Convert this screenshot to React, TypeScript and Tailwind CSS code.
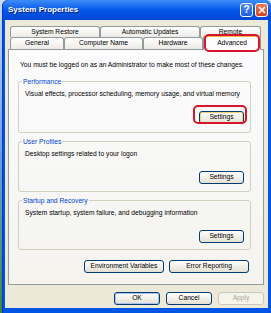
import React from "react";

const Btn = ({
    children,
    className = "",
    disabled = false,
    focus = "",
}: {
    children: React.ReactNode;
    className?: string;
    disabled?: boolean;
    focus?: string;
}) => (
    <div
        className={`h-[13px] flex items-center justify-center rounded-[3px] border leading-none ${
            disabled
                ? "border-[#C9C7BA] bg-[#F5F4EA] text-[#ACA899]"
                : "border-[#003C74] bg-linear-to-b from-white to-[#E3E0D2] text-black"
        } ${focus} ${className}`}
    >
        {children}
    </div>
);

const Tab = ({ label, w, selected = false }: { label: string; w: string; selected?: boolean }) => (
    <div
        className={`${w} flex items-center justify-center rounded-t-[3px] border border-b-0 border-[#919B9C] leading-none ${
            selected
                ? "relative z-10 -mt-[2px] -mb-[1px] bg-[#FCFCFE] border-t-2 border-t-[#F9B64A]"
                : "bg-linear-to-b from-white to-[#ECEBE6]"
        }`}
    >
        {label}
    </div>
);

const Group = ({ title, text, h, hot = false }: { title: string; text: string; h: string; hot?: boolean }) => (
    <fieldset className={`${h} ml-[9px] w-[233px] border border-[#D0D0BF] rounded-[3px] flex flex-col`}>
        <legend className="ml-[3px] px-[1px] text-[#0046D5] leading-[9px]">{title}</legend>
        <div className="pl-[6px] mt-[3px] leading-[9px]">{text}</div>
        <div className="flex justify-end pr-[6px] mt-[13px]">
            <Btn className="w-[45px]" focus={hot ? "shadow-[inset_0_0_0_1px_#F6CF7A]" : ""}>
                Settings
            </Btn>
        </div>
    </fieldset>
);

export default function App() {
    return (
        <div
            className="relative w-[271px] h-[313px] flex bg-linear-to-b from-[#C9DDF4] via-[#6C9ED8] to-[#3F8A2C] text-[6.7px] text-black overflow-hidden"
            style={{ fontFamily: '"Liberation Sans", Arial, sans-serif' }}
        >
            <div className="ml-[2px] flex-1 flex flex-col rounded-t-[6px] bg-[#0055E5] border-l border-[#0831D9]">
                {/* title bar */}
                <div className="h-[20px] flex items-center rounded-t-[6px] bg-linear-to-b from-[#3D8DF7] via-[#0458E9] to-[#0046D6]">
                    <span className="ml-[5px] text-[8px] font-bold text-white [text-shadow:1px_1px_0_#0A1E7A]">
                        System Properties
                    </span>
                    <div className="ml-auto flex gap-[2px] mr-[3px]">
                        <div className="w-[13px] h-[14px] rounded-[3px] border border-white bg-linear-to-b from-[#4A8CF8] to-[#1E5CE0] flex items-center justify-center text-white font-bold text-[10px] leading-none">
                            ?
                        </div>
                        <div className="w-[13px] h-[14px] rounded-[3px] border border-white bg-linear-to-b from-[#EE7A55] to-[#D3401D] flex items-center justify-center">
                            <svg width="8" height="8" viewBox="0 0 8 8">
                                <path d="M1 1L7 7M7 1L1 7" stroke="white" strokeWidth="1.6" />
                            </svg>
                        </div>
                    </div>
                </div>

                {/* body */}
                <div className="flex-1 mr-[3px] ml-[2px] mb-[5px] bg-[#ECE9D8] flex flex-col pl-[3px] pr-[4px] pt-[6px]">
                    <div className="ml-[2px] flex h-[11px]">
                        <Tab label="System Restore" w="w-[90px]" />
                        <Tab label="Automatic Updates" w="w-[100px]" />
                        <Tab label="Remote" w="w-[61px]" />
                    </div>
                    <div className="ml-[2px] flex h-[12px]">
                        <Tab label="General" w="w-[54px]" />
                        <Tab label="Computer Name" w="w-[79px]" />
                        <Tab label="Hardware" w="w-[60px]" />
                        <Tab label="Advanced" w="w-[58px]" selected />
                    </div>

                    {/* tab page */}
                    <div className="relative h-[236px] border border-[#919B9C] bg-linear-to-b from-[#FCFCFE] to-[#F4F3EE] flex flex-col">
                        <div className="pl-[11px] pt-[10px] leading-[9px]">
                            You must be logged on as an Administrator to make most of these changes.
                        </div>
                        <div className="mt-[8px] flex flex-col gap-[4px]">
                            <Group
                                title="Performance"
                                text="Visual effects, processor scheduling, memory usage, and virtual memory"
                                h="h-[56px]"
                                hot
                            />
                            <Group title="User Profiles" text="Desktop settings related to your logon" h="h-[55px]" />
                            <Group
                                title="Startup and Recovery"
                                text="System startup, system failure, and debugging information"
                                h="h-[54px]"
                            />
                        </div>
                        <div className="mt-[10px] flex justify-end gap-[5px] pr-[14px]">
                            <Btn className="w-[80px]">Environment Variables</Btn>
                            <Btn className="w-[80px]">Error Reporting</Btn>
                        </div>
                    </div>

                    <div className="mt-[7px] flex justify-end gap-[6px]">
                        <Btn className="w-[46px]" focus="shadow-[inset_0_0_0_1px_#A9C3EE]">
                            OK
                        </Btn>
                        <Btn className="w-[46px]">Cancel</Btn>
                        <Btn className="w-[46px]" disabled>
                            Apply
                        </Btn>
                    </div>
                </div>
            </div>

            {/* highlight rings */}
            <div className="absolute z-20 left-[204px] top-[34px] w-[56px] h-[18px] rounded-[5px] border-2 border-[#D8142A]" />
            <div className="absolute z-20 left-[193px] top-[105px] w-[54px] h-[19px] rounded-[5px] border-2 border-[#D8142A]" />
        </div>
    );
}
